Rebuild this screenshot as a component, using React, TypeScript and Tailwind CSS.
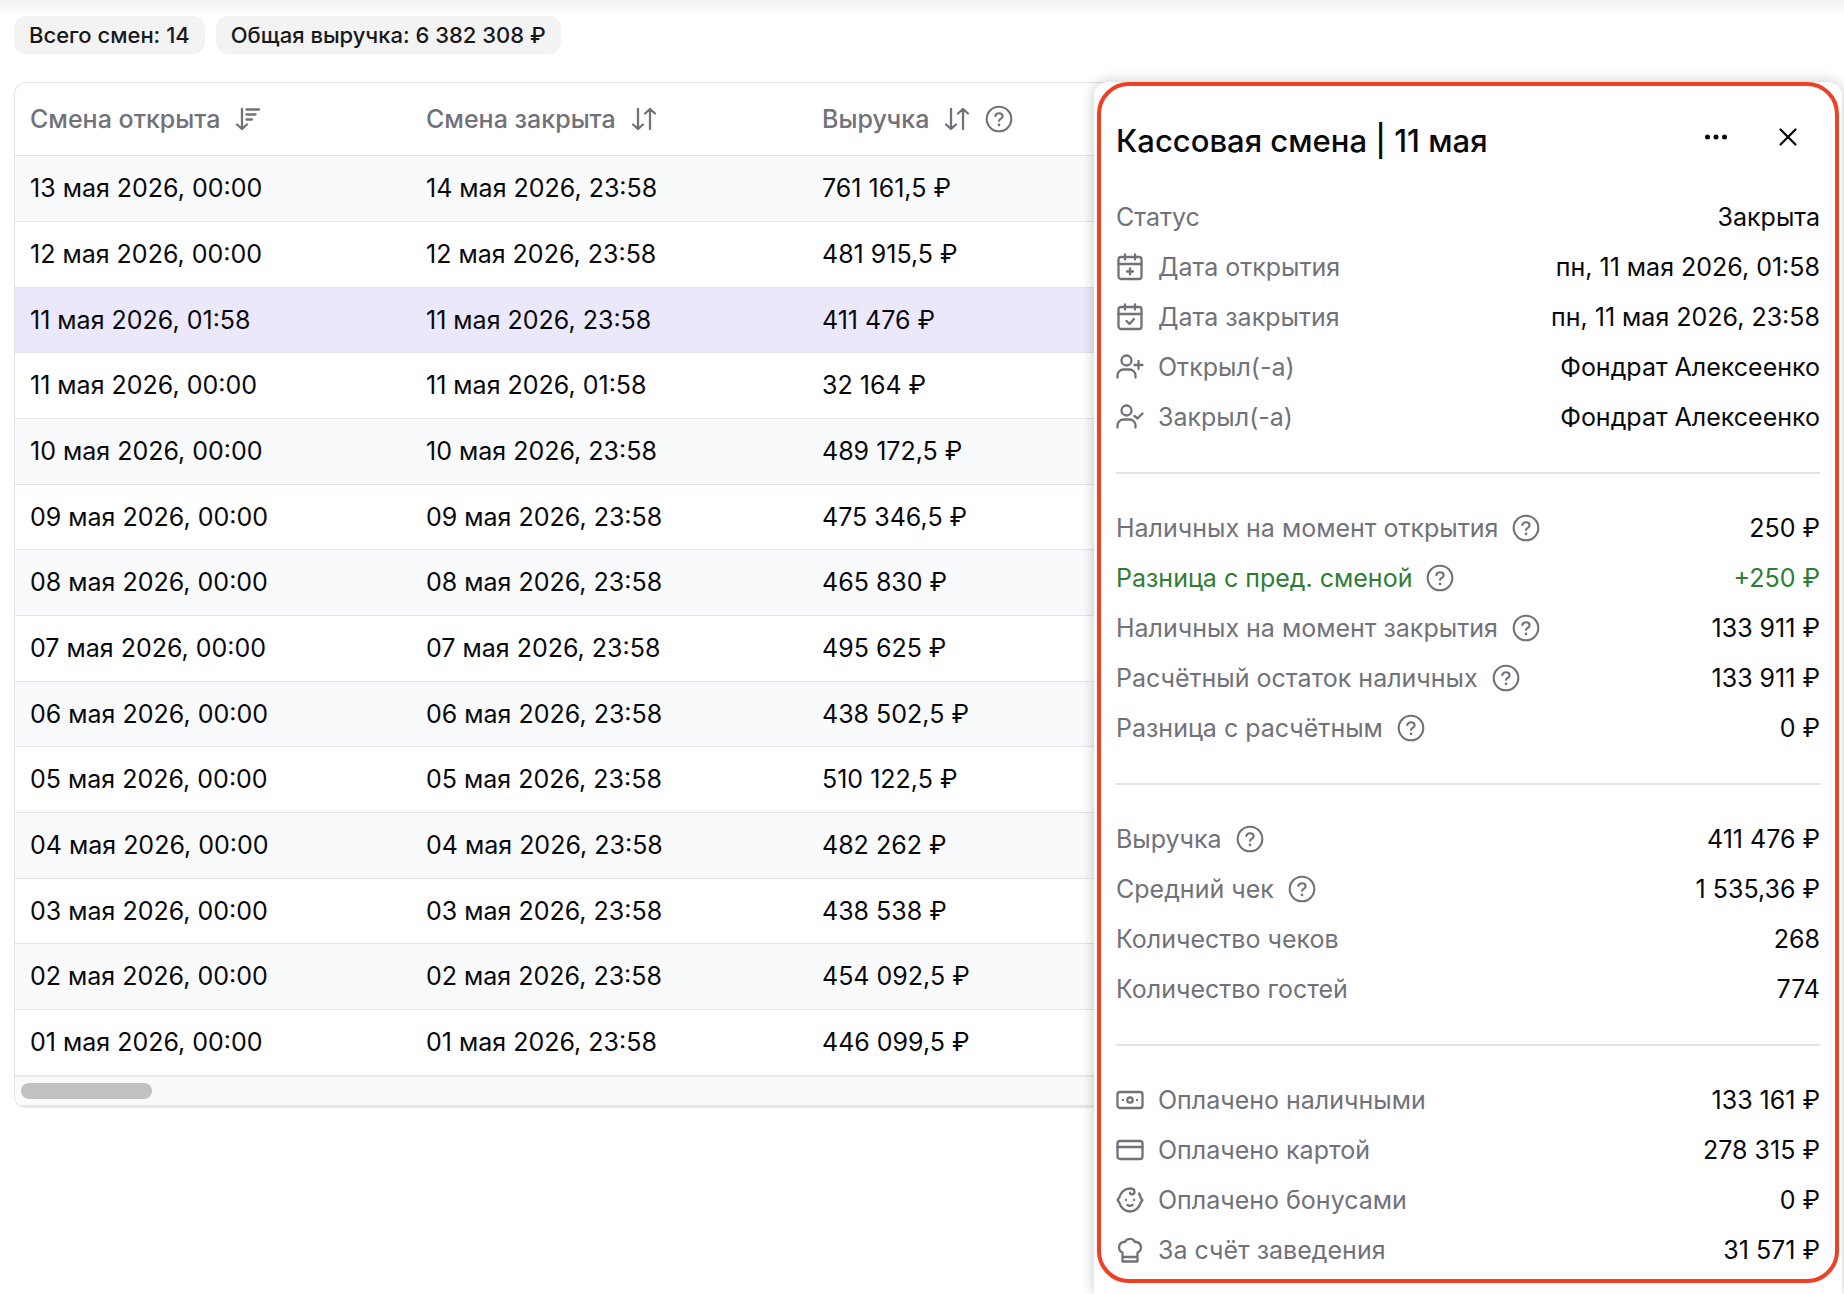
import type { ReactNode, SVGProps } from 'react';

const Icon = ({ children, ...props }: SVGProps<SVGSVGElement> & { children: ReactNode }) => (
  <svg
    viewBox="0 0 28 28"
    width="28"
    height="28"
    fill="none"
    stroke="currentColor"
    strokeWidth="2.3"
    strokeLinecap="round"
    strokeLinejoin="round"
    aria-hidden="true"
    className="shrink-0"
    {...props}
  >
    {children}
  </svg>
);

const SortDownIcon = () => (
  <Icon>
    <path d="M8 4v20M3 19.500l5 4.500 5-4.500M12.500 4.500h12.500M12.500 9.500h9M12.500 14.500h5.500" />
  </Icon>
);

const SortIcon = () => (
  <Icon>
    <path d="M8 4v20M3 19.500l5 4.500 5-4.500M20 24V4M15 8.500l5-4.500 5 4.500" />
  </Icon>
);

const HelpIcon = () => (
  <Icon strokeWidth="2.100">
    <circle cx="14" cy="14" r="12.300" />
    <path d="M10.300 11c.4-1.800 1.900-2.700 3.600-2.700 2.100 0 3.700 1.200 3.700 3.100 0 2.500-3.300 2.400-3.600 4.400" />
    <path d="M14 19.800v.1" strokeWidth="2.600" />
  </Icon>
);

const CalendarIcon = ({ children }: { children: ReactNode }) => (
  <Icon>
    <rect x="2.500" y="4" width="23" height="22" rx="2.500" />
    <path d="M2.500 11h23M9 1.500v5M19 1.500v5" />
    {children}
  </Icon>
);

const UserIcon = ({ children }: { children: ReactNode }) => (
  <Icon>
    <circle cx="10.500" cy="7.500" r="5" />
    <path d="M1.500 24.500v-2a6 6 0 0 1 6-6h6a6 6 0 0 1 6 6v2" />
    {children}
  </Icon>
);

const icons = {
  opened: (
    <CalendarIcon>
      <path d="M14 15.500v6M11 18.500h6" />
    </CalendarIcon>
  ),
  closed: (
    <CalendarIcon>
      <path d="M10.500 18l3 3 4.500-5" />
    </CalendarIcon>
  ),
  openedBy: (
    <UserIcon>
      <path d="M22.500 8v8M18.500 12h8" />
    </UserIcon>
  ),
  closedBy: (
    <UserIcon>
      <path d="M18.500 13l3 2.500 5-5" />
    </UserIcon>
  ),
  cash: (
    <Icon>
      <rect x="1.500" y="6" width="25" height="16" rx="2.500" />
      <circle cx="14" cy="14" r="2.700" />
      <path d="M7 14v.1M21 14v.1" />
    </Icon>
  ),
  card: (
    <Icon>
      <rect x="1.500" y="5" width="25" height="18" rx="2.500" />
      <path d="M1.500 11h25" />
    </Icon>
  ),
  bonus: (
    <Icon>
      <path d="M23 7.500c1 1.500 1.500 3 1.700 4.500l1.800 2-1.800 2.500c-1.200 5-5.500 9-10.700 9s-9.500-4-10.700-9L1.500 14l1.800-2.500C4.500 6.500 8.800 2.500 14 2.500c2.700 0 4.500 1.300 4.500 3.200 0 1.600-1.200 2.600-2.500 2.600s-2-.8-2-1.600" />
      <path d="M10 14v.1M18 14v.1M11.500 19c1.500 1 3.500 1 5 0" />
    </Icon>
  ),
  house: (
    <Icon>
      <path d="M6.500 25.500v-9A5.500 5.500 0 0 1 7.500 6c.8-.1 1.500 0 1.500 0a5.600 5.600 0 0 1 10 0s.7-.1 1.500 0a5.500 5.500 0 0 1 1 10.500v9zM6.500 21h15" />
    </Icon>
  ),
};

const shifts = [
  ['13 мая 2026, 00:00', '14 мая 2026, 23:58', '761 161,5 ₽'],
  ['12 мая 2026, 00:00', '12 мая 2026, 23:58', '481 915,5 ₽'],
  ['11 мая 2026, 01:58', '11 мая 2026, 23:58', '411 476 ₽'],
  ['11 мая 2026, 00:00', '11 мая 2026, 01:58', '32 164 ₽'],
  ['10 мая 2026, 00:00', '10 мая 2026, 23:58', '489 172,5 ₽'],
  ['09 мая 2026, 00:00', '09 мая 2026, 23:58', '475 346,5 ₽'],
  ['08 мая 2026, 00:00', '08 мая 2026, 23:58', '465 830 ₽'],
  ['07 мая 2026, 00:00', '07 мая 2026, 23:58', '495 625 ₽'],
  ['06 мая 2026, 00:00', '06 мая 2026, 23:58', '438 502,5 ₽'],
  ['05 мая 2026, 00:00', '05 мая 2026, 23:58', '510 122,5 ₽'],
  ['04 мая 2026, 00:00', '04 мая 2026, 23:58', '482 262 ₽'],
  ['03 мая 2026, 00:00', '03 мая 2026, 23:58', '438 538 ₽'],
  ['02 мая 2026, 00:00', '02 мая 2026, 23:58', '454 092,5 ₽'],
  ['01 мая 2026, 00:00', '01 мая 2026, 23:58', '446 099,5 ₽'],
];

const SELECTED_SHIFT = 2;

type Detail = {
  label: string;
  value: string;
  icon?: ReactNode;
  help?: boolean;
  positive?: boolean;
};

const sections: Detail[][] = [
  [
    { label: 'Статус', value: 'Закрыта' },
    { label: 'Дата открытия', value: 'пн, 11 мая 2026, 01:58', icon: icons.opened },
    { label: 'Дата закрытия', value: 'пн, 11 мая 2026, 23:58', icon: icons.closed },
    { label: 'Открыл(-а)', value: 'Фондрат Алексеенко', icon: icons.openedBy },
    { label: 'Закрыл(-а)', value: 'Фондрат Алексеенко', icon: icons.closedBy },
  ],
  [
    { label: 'Наличных на момент открытия', value: '250 ₽', help: true },
    { label: 'Разница с пред. сменой', value: '+250 ₽', help: true, positive: true },
    { label: 'Наличных на момент закрытия', value: '133 911 ₽', help: true },
    { label: 'Расчётный остаток наличных', value: '133 911 ₽', help: true },
    { label: 'Разница с расчётным', value: '0 ₽', help: true },
  ],
  [
    { label: 'Выручка', value: '411 476 ₽', help: true },
    { label: 'Средний чек', value: '1 535,36 ₽', help: true },
    { label: 'Количество чеков', value: '268' },
    { label: 'Количество гостей', value: '774' },
  ],
  [
    { label: 'Оплачено наличными', value: '133 161 ₽', icon: icons.cash },
    { label: 'Оплачено картой', value: '278 315 ₽', icon: icons.card },
    { label: 'Оплачено бонусами', value: '0 ₽', icon: icons.bonus },
    { label: 'За счёт заведения', value: '31 571 ₽', icon: icons.house },
  ],
];

const HelpButton = () => (
  <button type="button" aria-label="Подсказка" className="text-[#71717a]">
    <HelpIcon />
  </button>
);

const DetailRow = ({ label, value, icon, help, positive }: Detail) => (
  <div className={`flex h-[50px] items-center justify-between ${positive ? 'text-[#2e7d32]' : ''}`}>
    <dt className={`flex items-center gap-3.5 ${positive ? '' : 'text-[#71717a]'}`}>
      {icon}
      {label}
      {help && <HelpButton />}
    </dt>
    <dd>{value}</dd>
  </div>
);

const ShiftsTable = () => (
  <div className="-mr-4 min-w-0 flex-1 self-start overflow-hidden rounded-l-[12px] border border-r-0 border-[#e4e4e7]">
    <table className="w-[1188px] table-fixed border-collapse text-left">
      <thead>
        <tr className="h-[72px] text-[#71717a]">
          <th className="pl-[15px] font-medium">
            <span className="flex items-center gap-3.5">
              Смена открыта
              <button type="button" aria-label="Сортировать по открытию">
                <SortDownIcon />
              </button>
            </span>
          </th>
          <th className="pl-[15px] font-medium">
            <span className="flex items-center gap-3.5">
              Смена закрыта
              <button type="button" aria-label="Сортировать по закрытию">
                <SortIcon />
              </button>
            </span>
          </th>
          <th className="pl-[15px] font-medium">
            <span className="flex items-center gap-3.5">
              Выручка
              <button type="button" aria-label="Сортировать по выручке">
                <SortIcon />
              </button>
              <HelpButton />
            </span>
          </th>
        </tr>
      </thead>
      <tbody>
        {shifts.map((shift, index) => (
          <tr
            key={shift[0]}
            className={`h-[66px] border-t border-[#e4e4e7] nth-[3n]:h-[65px] ${
              index === SELECTED_SHIFT ? 'bg-[#ebe8fc]' : 'odd:bg-[#f9fafc]'
            }`}
          >
            {shift.map((cell, column) => (
              <td key={column} className="pl-[15px]">
                {cell}
              </td>
            ))}
          </tr>
        ))}
      </tbody>
    </table>

    {/* Horizontal scrollbar */}
    <div className="border-y-2 border-[#e8e8e8] bg-[#fafafa] px-1.5 py-1.5">
      <div className="h-4 w-[131px] rounded-full bg-[#c1c1c1]" />
    </div>
  </div>
);

const ShiftPanel = () => (
  <aside className="relative w-[748px] shrink-0 rounded-t-[14px] bg-white px-[3px] pb-2 shadow-[0_0_14px_rgba(0,0,0,0.22)]">
    <div className="rounded-[32px] border-4 border-[#ee4023] px-[15px] pb-1">
      <header className="flex h-[106px] items-center justify-between pt-1">
        <h2 className="text-[31px] font-medium">Кассовая смена | 11 мая</h2>
        <div className="mb-2 flex items-center gap-2">
          <button type="button" aria-label="Действия" className="flex size-16 items-center justify-center">
            <Icon fill="currentColor" stroke="none">
              <circle cx="5.500" cy="14" r="2.500" />
              <circle cx="14" cy="14" r="2.500" />
              <circle cx="22.500" cy="14" r="2.500" />
            </Icon>
          </button>
          <button type="button" aria-label="Закрыть" className="flex size-16 items-center justify-center">
            <Icon>
              <path d="M6.500 6.500l15 15M21.500 6.500l-15 15" />
            </Icon>
          </button>
        </div>
      </header>

      {sections.map((section, index) => (
        <dl key={index} className={index > 0 ? 'mt-[30px] border-t-2 border-[#e4e4e7] pt-[29px]' : ''}>
          {section.map((detail) => (
            <DetailRow key={detail.label} {...detail} />
          ))}
        </dl>
      ))}
    </div>
  </aside>
);

const App = () => {
  return (
    <main className="flex min-h-screen flex-col overflow-hidden bg-white pr-0.5 pl-3.5 font-[Inter,'Noto_Sans',sans-serif] text-[25px] leading-8 text-[#09090b]">
      <div className="-mr-0.5 -ml-3.5 h-4 bg-linear-to-b from-[#f2f2f2] to-white" />
      <div className="mb-7 flex gap-[11px] text-[22px] leading-[38px] font-medium text-[#18181b]">
        <span className="rounded-[12px] bg-[#f3f3f3] px-[15px]">Всего смен: 14</span>
        <span className="rounded-[12px] bg-[#f3f3f3] px-[15px]">Общая выручка: 6 382 308 ₽</span>
      </div>
      <div className="flex flex-1">
        <ShiftsTable />
        <ShiftPanel />
      </div>
    </main>
  );
};

export default App;
